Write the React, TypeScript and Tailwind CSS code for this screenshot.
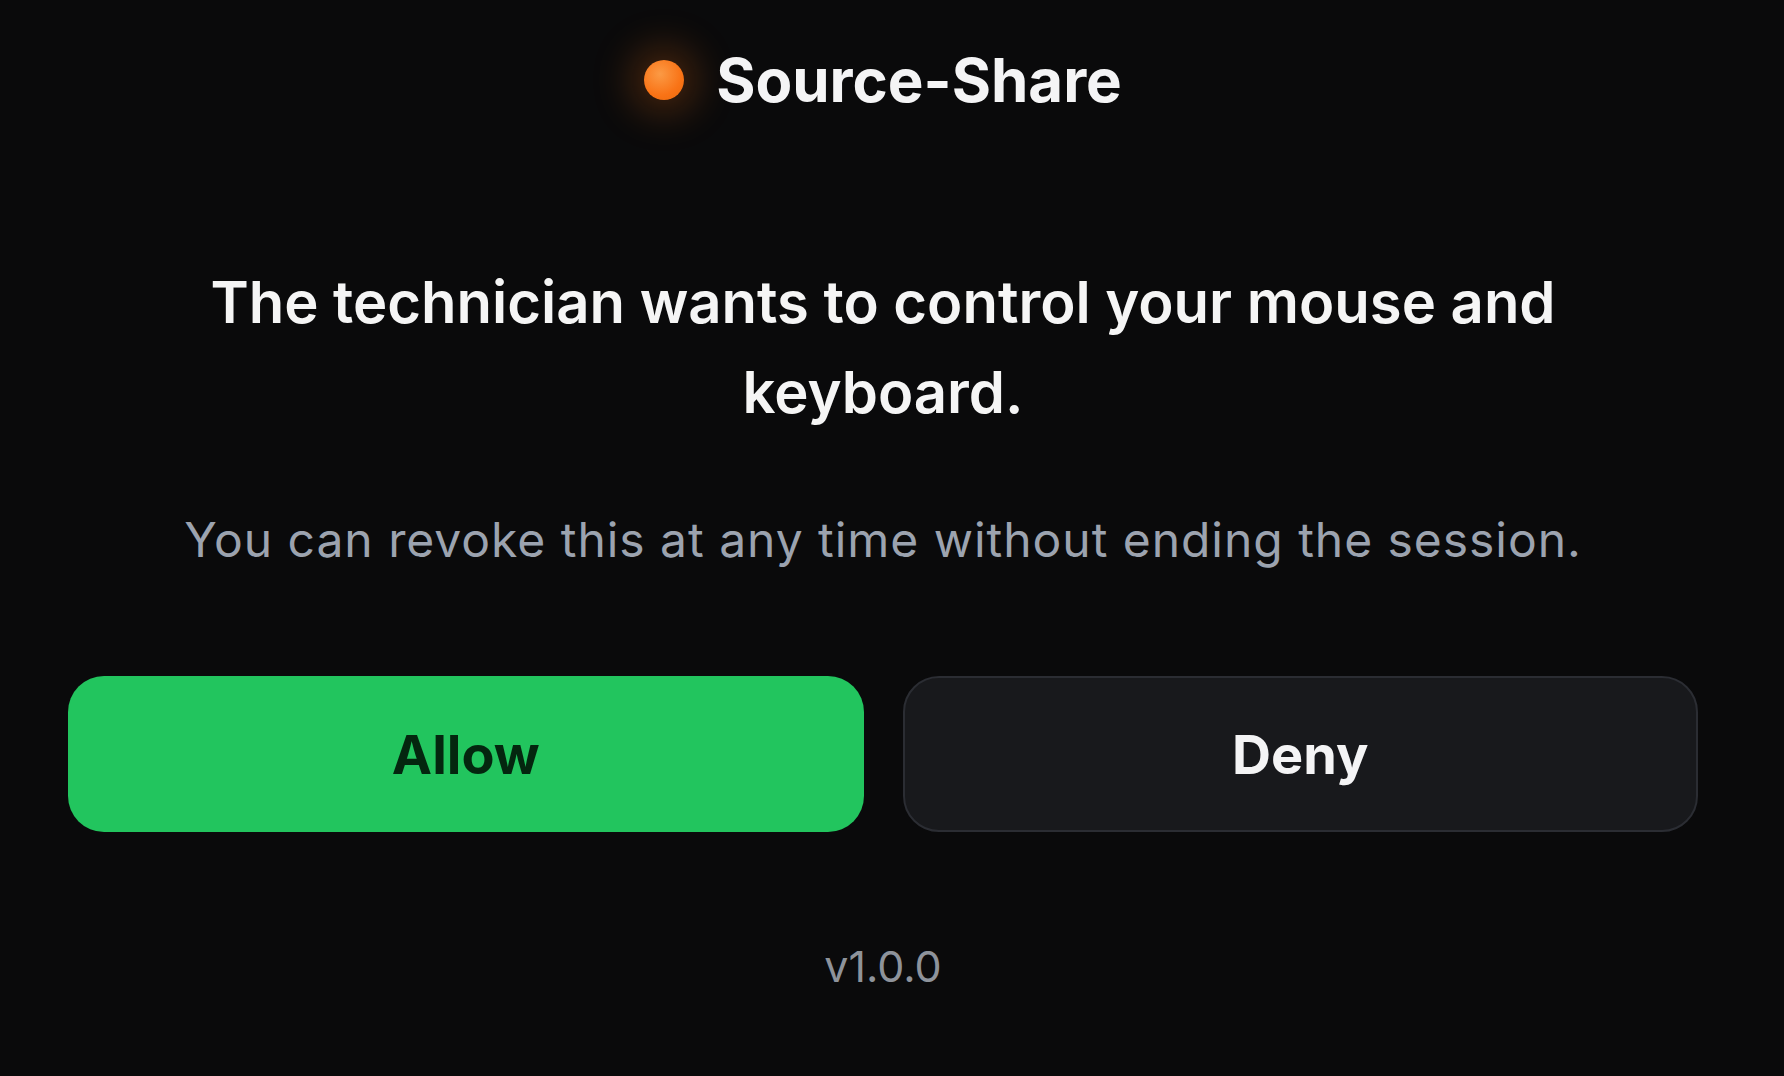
import React from 'react';

export default function App() {
  return (
    <div className="min-h-screen bg-[#0a0a0b] font-['Inter',sans-serif] pl-[68px] pr-[86px] flex flex-col items-center">
      {/* header */}
      <div className="pt-[50px] flex items-center gap-[32px]">
        <span className="w-[40px] h-[40px] rounded-full bg-[radial-gradient(circle_at_40%_35%,#fb9a45,#f97316_60%,#ea6a0c)] shadow-[0_0_40px_12px_rgba(249,115,22,0.28)]" />
        <h1 className="text-[60px] leading-[60px] font-bold text-[#f4f4f5]">Source-Share</h1>
      </div>

      {/* prompt */}
      <p className="mt-[147px] text-center text-[58px] leading-[90px] font-semibold text-[#f5f5f5]">
        The technician wants to control your mouse and
        <br />
        keyboard.
      </p>
      <p className="mt-[68px] text-center text-[48px] leading-[70px] tracking-[0.02em] text-[#9ca3af]">
        You can revoke this at any time without ending the session.
      </p>

      {/* actions */}
      <div className="mt-[101px] w-full grid grid-cols-2 gap-[39px]">
        <button className="h-[156px] rounded-[36px] bg-[#22c55e] text-[#04260f] text-[54px] font-bold">
          Allow
        </button>
        <button className="h-[156px] rounded-[36px] bg-[#18191c] border-2 border-[#2b2d33] text-[#f4f4f5] text-[54px] font-bold">
          Deny
        </button>
      </div>

      <div className="mt-[104px] text-[43px] leading-[61px] text-[#8e939b]">v1.0.0</div>
    </div>
  );
}
